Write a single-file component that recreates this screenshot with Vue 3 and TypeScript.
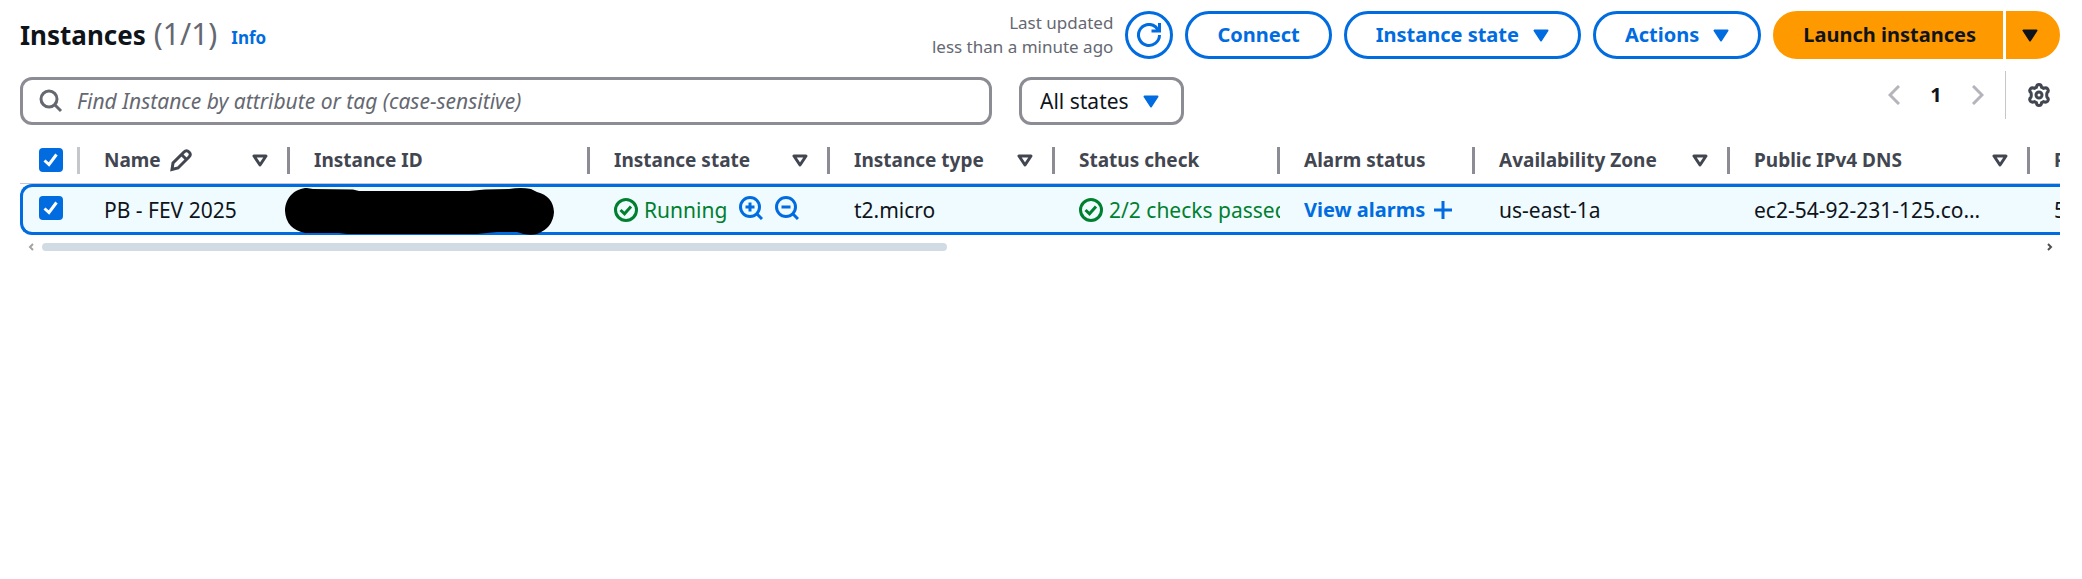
<script setup lang="ts">
import { ref } from 'vue'

interface Column {
  key: string
  label: string
  width: number
  sortable?: boolean
  editable?: boolean
}

const columns: Column[] = [
  { key: 'name', label: 'Name', width: 210, sortable: true, editable: true },
  { key: 'id', label: 'Instance ID', width: 300 },
  { key: 'state', label: 'Instance state', width: 240, sortable: true },
  { key: 'type', label: 'Instance type', width: 225, sortable: true },
  { key: 'check', label: 'Status check', width: 225 },
  { key: 'alarm', label: 'Alarm status', width: 195 },
  { key: 'zone', label: 'Availability Zone', width: 255, sortable: true },
  { key: 'dns', label: 'Public IPv4 DNS', width: 300, sortable: true },
  { key: 'ip', label: 'Public IPv4', width: 240 },
]

const allSelected = ref(true)
const rowSelected = ref(true)
const query = ref('')
</script>

<template>
  <main class="panel">
    <header class="header">
      <h1 class="title">Instances <span class="count">(1/1)</span></h1>
      <a class="info" href="#info">Info</a>
      <div class="actions">
        <p class="updated">Last updated<br />less than a minute ago</p>
        <button class="btn round" type="button" aria-label="Refresh">
          <svg class="icon" viewBox="0 0 24 24">
            <path d="M22.5 12A10.5 10.5 0 1 1 18.500 3.700L22 8" />
            <path d="M22.500 0v8H14.500" />
          </svg>
        </button>
        <button class="btn" type="button">Connect</button>
        <button class="btn" type="button">
          Instance state
          <svg class="caret" viewBox="0 0 16 13"><path d="M1.5 1.5h13L8 11.5z" /></svg>
        </button>
        <button class="btn" type="button">
          Actions
          <svg class="caret" viewBox="0 0 16 13"><path d="M1.5 1.5h13L8 11.5z" /></svg>
        </button>
        <div class="split">
          <button class="btn primary main" type="button">Launch instances</button>
          <button class="btn primary more" type="button" aria-label="More launch options">
            <svg class="caret" viewBox="0 0 16 13"><path d="M1.5 1.5h13L8 11.5z" /></svg>
          </button>
        </div>
      </div>
    </header>

    <section class="toolbar">
      <div class="filters">
        <label class="search">
          <svg class="icon" viewBox="0 0 24 24">
            <circle cx="10" cy="10" r="8" />
            <path d="M15.500 15.500l6.500 6.500" />
          </svg>
          <input
            v-model="query"
            type="text"
            aria-label="Find instances"
            placeholder="Find Instance by attribute or tag (case-sensitive)"
          />
        </label>
        <div class="select">
          <select aria-label="Instance state filter">
            <option>All states</option>
          </select>
          <svg class="caret" viewBox="0 0 16 13"><path d="M1.5 1.5h13L8 11.5z" /></svg>
        </div>
      </div>
      <nav class="paging" aria-label="Pages">
        <button class="plain arrow" type="button" aria-label="Previous page">
          <svg viewBox="0 0 12 20"><path d="M11 1L2 10l9 9" /></svg>
        </button>
        <button class="plain page" type="button">1</button>
        <button class="plain arrow" type="button" aria-label="Next page">
          <svg viewBox="0 0 12 20"><path d="M1 1l9 9-9 9" /></svg>
        </button>
        <button class="plain settings" type="button" aria-label="Preferences">
          <svg class="icon" viewBox="0 0 24 24">
            <path
              d="M9.4 4.4Q9.6 1.5 12 1.5T14.6 4.4L16.4 5.4Q19 4.2 20.6 5.8Q22.2 8.2 20 9.8Q19.4 12 20 14.2Q22.2 15.8 20.6 18.2Q19 19.8 16.4 18.6L14.6 19.6Q14.4 22.5 12 22.5T9.4 19.6L7.6 18.6Q5 19.8 3.4 18.2Q1.8 15.8 4 14.2Q4.6 12 4 9.8Q1.8 8.2 3.4 5.8Q5 4.2 7.6 5.4Z"
            />
            <circle cx="12" cy="12" r="3" />
          </svg>
        </button>
      </nav>
    </section>

    <div class="table-wrap">
      <table>
        <colgroup>
          <col class="col-check" />
          <col v-for="c in columns" :key="c.key" :style="{ width: c.width + 'px' }" />
        </colgroup>
        <thead>
          <tr>
            <th class="check-cell">
              <input v-model="allSelected" type="checkbox" aria-label="Select all instances" />
            </th>
            <th v-for="c in columns" :key="c.key" scope="col">
              <div class="th">
                <span>{{ c.label }}</span>
                <svg v-if="c.editable" class="icon pencil" viewBox="0 0 24 24">
                  <path d="M3 21.500l1-6.500L15 4q2.500-2.500 5 0t0 5L9 20z" />
                  <path d="M12.500 6.500l5 5" />
                </svg>
                <svg v-if="c.sortable" class="sort" viewBox="0 0 16 13">
                  <path d="M2 2h12L8 11z" />
                </svg>
              </div>
            </th>
          </tr>
        </thead>
        <tbody>
          <tr>
            <td class="check-cell">
              <input v-model="rowSelected" type="checkbox" aria-label="Select PB - FEV 2025" />
            </td>
            <td>PB - FEV 2025</td>
            <td class="hidden-id">
              <svg class="redaction" viewBox="0 0 270 48" aria-label="Hidden instance ID">
                <path
                  d="M0 23C0 9 11 0 22 0L28 1L68 1.500L74 3H184L200 1.500L224 1Q236-1 246 1L252 4Q268 8 269 24Q268 40 252 46Q242 48 232 44H212L192 46H62L54 45H20Q1 41 0 23Z"
                />
              </svg>
            </td>
            <td>
              <div class="state">
                <span class="ok">
                  <svg class="icon" viewBox="0 0 24 24">
                    <circle cx="12" cy="12" r="10.500" />
                    <path d="M6.500 12l4 3.800L17 8.500" />
                  </svg>
                  Running
                </span>
                <button class="plain zoom" type="button" aria-label="Filter for Running">
                  <svg class="icon" viewBox="0 0 24 24">
                    <circle cx="11" cy="11" r="9.500" />
                    <path d="M18 18l5 5M6.500 11h9M11 6.500v9" />
                  </svg>
                </button>
                <button class="plain zoom" type="button" aria-label="Filter out Running">
                  <svg class="icon" viewBox="0 0 24 24">
                    <circle cx="11" cy="11" r="9.500" />
                    <path d="M18 18l5 5M6.500 11h9" />
                  </svg>
                </button>
              </div>
            </td>
            <td>t2.micro</td>
            <td class="clip">
              <span class="ok">
                <svg class="icon" viewBox="0 0 24 24">
                  <circle cx="12" cy="12" r="10.500" />
                  <path d="M6.500 12l4 3.800L17 8.500" />
                </svg>
                2/2 checks passed
              </span>
            </td>
            <td>
              <a class="alarms" href="#alarms">
                View alarms
                <svg class="plus" viewBox="0 0 18 18"><path d="M9 0v18M0 9h18" /></svg>
              </a>
            </td>
            <td>us-east-1a</td>
            <td>ec2-54-92-231-125.co…</td>
            <td>54.92.231.125</td>
          </tr>
        </tbody>
      </table>
    </div>

    <div class="scrollbar" aria-hidden="true">
      <svg class="tip dim" viewBox="0 0 6 8"><path d="M5 1L2 4l3 3" /></svg>
      <div class="track"><div class="thumb"></div></div>
      <svg class="tip" viewBox="0 0 6 8"><path d="M1 1l3 3-3 3" /></svg>
    </div>
  </main>
</template>

<style>
body {
  background: #fff;
}
</style>

<style scoped>
.panel {
  padding: 11px 22px 0 20px;
  overflow: hidden;
  font-family: 'Noto Sans', sans-serif;
  font-size: 20px;
  line-height: 30px;
  color: #0f141a;
}
.panel * {
  box-sizing: border-box;
}
button,
input,
select {
  font: inherit;
  color: inherit;
  margin: 0;
}
svg {
  display: block;
  flex: none;
  fill: none;
  stroke: currentColor;
  stroke-width: 3;
}
.icon {
  width: 24px;
  height: 24px;
}
.caret {
  width: 16px;
  height: 13px;
  fill: currentColor;
  stroke-linejoin: round;
  stroke-width: 2;
}
.header {
  display: flex;
  align-items: center;
  height: 48px;
}
.title {
  display: flex;
  align-items: baseline;
  gap: 8px;
  margin: 0;
  font-size: 26px;
  font-weight: 700;
}
.count {
  font-size: 30px;
  line-height: 26px;
  font-weight: 400;
  color: #656871;
}
.info {
  margin: 6px 0 0 14px;
  font-size: 17px;
  font-weight: 700;
  color: #006ce0;
  text-decoration: none;
}
.actions {
  display: flex;
  align-items: center;
  gap: 12px;
  margin-left: auto;
}
.updated {
  margin: 0;
  font-size: 17px;
  line-height: 24px;
  text-align: right;
  color: #656871;
}
.btn {
  display: flex;
  align-items: center;
  justify-content: center;
  gap: 14px;
  height: 48px;
  padding: 0 29px;
  border: 3px solid #006ce0;
  border-radius: 24px;
  background: #fff;
  color: #006ce0;
  font-weight: 700;
  white-space: nowrap;
}
.round {
  width: 48px;
  padding: 0;
}
.split {
  display: flex;
  gap: 3px;
}
.primary {
  border-color: #ff9900;
  background: #ff9900;
  color: #0f141a;
}
.main {
  border-radius: 24px 0 0 24px;
  padding: 0 24px 0 27px;
}
.more {
  width: 54px;
  padding: 0 6px 0 0;
  border-radius: 0 24px 24px 0;
}
.toolbar {
  display: flex;
  justify-content: space-between;
  align-items: flex-start;
  gap: 24px;
  margin-top: 12px;
}
.filters {
  display: flex;
  flex: 1;
  gap: 27px;
  padding-top: 6px;
  font-size: 21px;
}
.search {
  display: flex;
  align-items: center;
  gap: 14px;
  flex: 0 1 972px;
  height: 48px;
  padding: 0 16px;
  border: 3px solid #8c8c94;
  border-radius: 12px;
  color: #656871;
}
.search input {
  flex: 1;
  min-width: 0;
  height: 36px;
  padding: 0;
  border: 0;
  outline: 0;
  background: transparent;
}
.search input::placeholder {
  color: #656871;
  font-style: italic;
  opacity: 1;
}
.select {
  display: grid;
  align-items: center;
  width: 165px;
}
.select select {
  grid-area: 1 / 1;
  width: 100%;
  height: 48px;
  padding: 0 0 0 18px;
  border: 3px solid #8c8c94;
  border-radius: 12px;
  background: #fff;
  appearance: none;
}
.select .caret {
  grid-area: 1 / 1;
  justify-self: end;
  margin-right: 25px;
  color: #006ce0;
  pointer-events: none;
}
.plain {
  display: flex;
  align-items: center;
  justify-content: center;
  padding: 0;
  border: 0;
  background: none;
}
.paging {
  display: flex;
  align-items: center;
  height: 48px;
}
.arrow {
  width: 36px;
  height: 36px;
  color: #b4b4bb;
}
.arrow svg {
  width: 12px;
  height: 20px;
}
.page {
  width: 48px;
  height: 36px;
  font-weight: 700;
}
.settings {
  width: 55px;
  height: 48px;
  margin-left: 9px;
  padding-left: 12px;
  border-left: 1px solid #c6c6cd;
  color: #424650;
}
.table-wrap {
  margin-top: 6px;
  overflow: hidden;
}
table {
  width: 2250px;
  table-layout: fixed;
  border-collapse: separate;
  border-spacing: 0;
}
.col-check {
  width: 60px;
}
th,
td {
  padding: 0 0 0 24px;
  text-align: left;
  white-space: nowrap;
}
th {
  height: 53px;
  padding-top: 6px;
  border-bottom: 1px solid #c6c6cd;
  font-size: 19px;
  font-weight: 700;
  color: #424650;
}
.th {
  display: flex;
  align-items: center;
  gap: 8px;
  height: 27px;
  padding-right: 19px;
  border-right: 3px solid #8c8c94;
}
.sort {
  width: 16px;
  height: 13px;
  margin-left: auto;
  stroke-linejoin: round;
}
td {
  height: 51px;
  border-top: 3px solid #006ce0;
  border-bottom: 3px solid #006ce0;
  background: #f0fbff;
  font-size: 21px;
}
td:first-child {
  border-left: 3px solid #006ce0;
  border-radius: 12px 0 0 12px;
}
.check-cell {
  padding-left: 19px;
}
td.check-cell {
  padding-left: 16px;
  padding-bottom: 4px;
}
th.check-cell {
  background: linear-gradient(#c6c6cd, #c6c6cd) right 16px / 3px 27px no-repeat;
}
input[type='checkbox'] {
  display: block;
  appearance: none;
  width: 24px;
  height: 24px;
  border-radius: 4px;
  border: 2px solid #8c8c94;
}
input[type='checkbox']:checked {
  border: 0;
  background: #006ce0
    url("data:image/svg+xml,%3Csvg xmlns='http://www.w3.org/2000/svg' viewBox='0 0 24 24'%3E%3Cpath d='M5.500 12.500l4.500 4L17.500 6.500' fill='none' stroke='white' stroke-width='3'/%3E%3C/svg%3E");
}
.hidden-id {
  position: relative;
}
.redaction {
  position: absolute;
  top: 1px;
  left: -5px;
  width: 270px;
  height: 48px;
  fill: #000;
  stroke: none;
}
.state,
.ok,
.alarms {
  display: flex;
  align-items: center;
}
.ok {
  gap: 6px;
  color: #00802f;
}
.zoom {
  margin-left: 12px;
  padding-bottom: 4px;
  color: #006ce0;
}
.clip {
  overflow: hidden;
}
.alarms {
  gap: 9px;
  color: #006ce0;
  font-size: 20px;
  font-weight: 700;
  text-decoration: none;
}
.plus {
  width: 18px;
  height: 18px;
}
.scrollbar {
  display: flex;
  align-items: center;
  gap: 8px;
  padding: 8px 7px 0 8px;
  color: #505050;
}
.tip {
  width: 6px;
  height: 8px;
  stroke-width: 2;
}
.dim {
  color: #a3a3a3;
}
.track {
  flex: 1;
}
.thumb {
  width: 45.3%;
  height: 8px;
  border-radius: 4px;
  background: #d1dbe4;
}
</style>
